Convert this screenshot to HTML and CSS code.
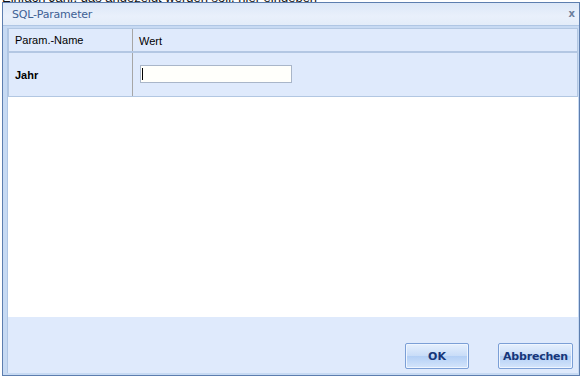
FILE: index.html
```html
<!DOCTYPE html>
<html lang="de">
<head>
    <meta charset="UTF-8">
    <title>SQL-Parameter</title>
    <link rel="stylesheet" href="styles.css">
</head>
<body>

    <!-- Seite hinter dem Dialog -->
    <div class="page">
        <p class="page-text">Einfach Jahr, das angezeigt werden soll, hier eingeben</p>
    </div>

    <!-- Dialog -->
    <div class="dialog">
        <div class="title-bar">
            <span class="title">SQL-Parameter</span>
            <span class="close">x</span>
        </div>

        <div class="content">
            <div class="param-grid">
                <div class="row head">
                    <div class="cell name">Param.-Name</div>
                    <div class="cell value">Wert</div>
                </div>
                <div class="row">
                    <div class="cell name"><b>Jahr</b></div>
                    <div class="cell value">
                        <div class="text-input"><span class="caret"></span></div>
                    </div>
                </div>
            </div>
            <div class="empty"></div>
        </div>

        <div class="footer">
            <button class="btn ok">OK</button>
            <button class="btn cancel">Abbrechen</button>
        </div>
    </div>

</body>
</html>
```

FILE: styles.css
```css
body {
    margin: 0;
    background: #ffffff;
    font-family: "Liberation Sans", Arial, sans-serif;
    font-size: 11px;
    color: #000;
    width: 584px;
    height: 377px;
    overflow: hidden;
    position: relative;
}
.page {
    height: 377px;
}
.page-text {
    margin: 0;
    padding-left: 2px;
    font-size: 13px;
    line-height: 13px;
    margin-top: -9px;
    white-space: nowrap;
    color: #111;
}
.dialog {
    position: absolute;
    left: 2px;
    top: 2px;
    width: 578px;
    height: 374px;
    box-sizing: border-box;
    border: 1px solid #5d7eaf;
    background: #c7daf3;
    display: flex;
    flex-direction: column;
}
.title-bar {
    height: 22px;
    display: flex;
    align-items: center;
    justify-content: space-between;
    padding: 0 4px 0 9px;
    background: linear-gradient(to bottom, #dce7f7, #e9f0fb 60%, #e3ecf9);
    border-bottom: 1px solid #afc6e4;
}
.title {
    color: #3e6094;
    font-family: "DejaVu Sans", sans-serif;
    font-size: 11px;
    letter-spacing: -0.2px;
}
.close {
    color: #6d7f9c;
    font-weight: bold;
    font-size: 10px;
    font-family: "DejaVu Sans", sans-serif;
    margin-top: -1px;
}
.content {
    flex: 1;
    margin: 2px 1px 0 4px;
    border-left: 1px solid #afc6e4;
    background: #ffffff;
    display: flex;
    flex-direction: column;
}
.param-grid {
    background: #dfeafc;
    border: 1px solid #b2c7e2;
}
.row {
    display: flex;
    height: 43px;
}
.row.head {
    height: 22px;
    border-bottom: 2px solid #b3c7e3;
}
.cell {
    display: flex;
    align-items: center;
}
.cell.name {
    width: 117px;
    padding-left: 6px;
    border-right: 1px solid #a6a6a6;
}
.cell.value {
    padding-left: 6px;
}
.row.head .cell.value {
    padding-top: 1px;
}
.text-input {
    width: 150px;
    height: 16px;
    margin-top: -2px;
    margin-left: 1px;
    background: #fffffb;
    border: 1px solid #a9b6c9;
    display: flex;
    align-items: center;
}
.caret {
    width: 1px;
    height: 12px;
    margin-left: 1px;
    background: #000;
}
.empty {
    flex: 1;
}
.footer {
    height: 52px;
    margin: 0 1px 2px 4px;
    background: #dfeafc;
    display: flex;
    justify-content: flex-end;
    align-items: flex-end;
    gap: 29px;
    padding: 0 5px 4px 0;
    border-left: 1px solid #afc6e4;
}
.btn {
    height: 26px;
    padding: 0;
    border: 1px solid #7b9fd6;
    border-radius: 2px;
    background: linear-gradient(to bottom, #e6f0fd, #c8dcf8 50%, #b3cff5 51%, #d4e5fb);
    color: #16367a;
    font-family: "DejaVu Sans", sans-serif;
    font-weight: bold;
    font-size: 11px;
    box-shadow: inset 0 0 0 1px #eef5ff;
}
.btn.ok {
    width: 64px;
}
.btn.cancel {
    width: 75px;
    letter-spacing: -0.2px;
}
```
